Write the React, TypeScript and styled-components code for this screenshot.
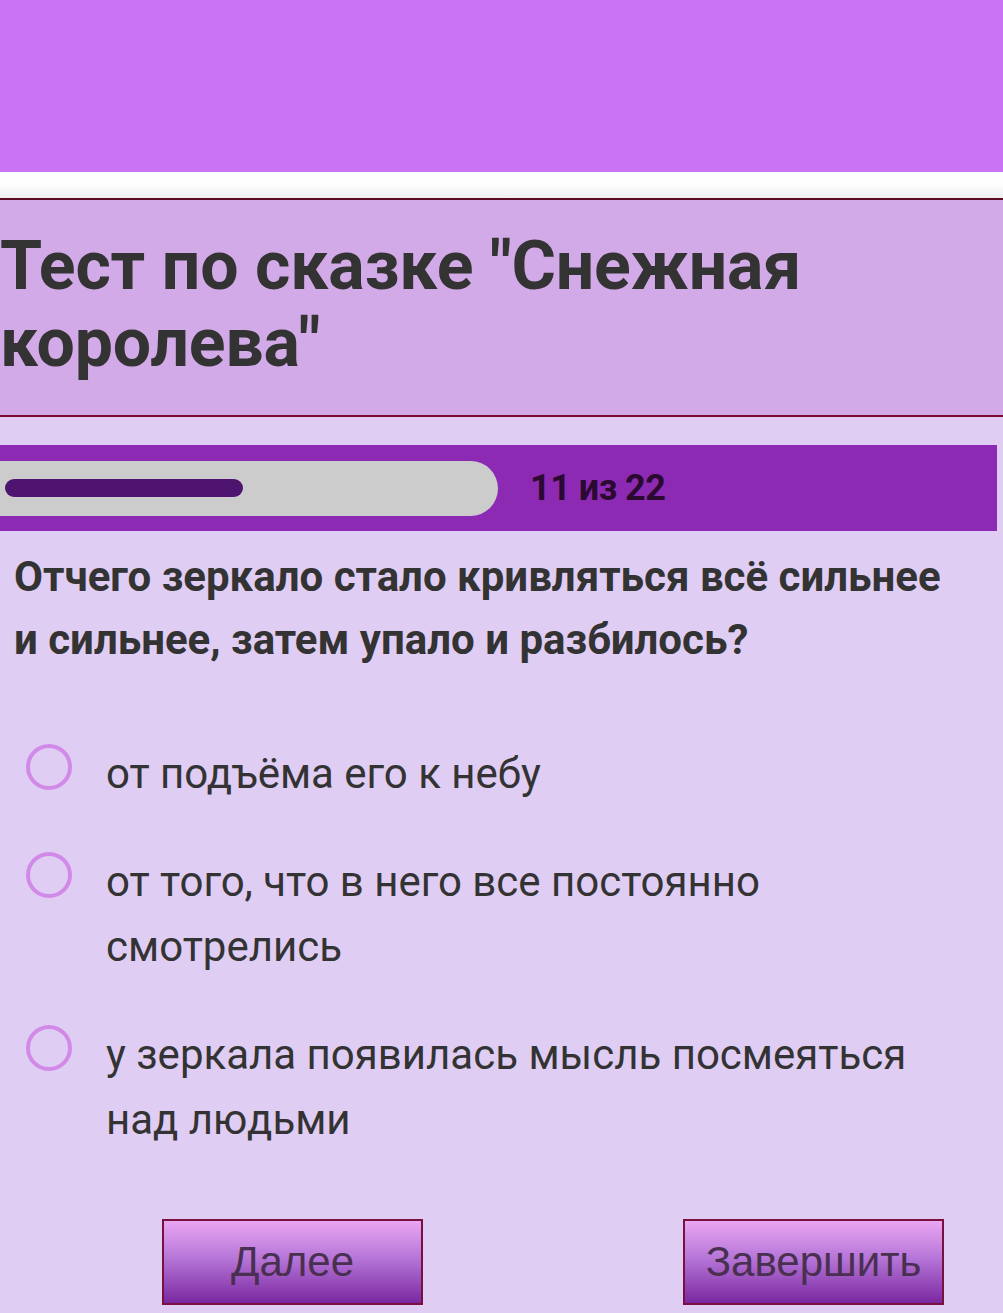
import React, { useState } from "react";
import styled, { createGlobalStyle } from "styled-components";

const GlobalStyle = createGlobalStyle`
  html, body {
    margin: 0;
    padding: 0;
    background: #dfcdf3;
  }
  body {
    font-family: Roboto, "Liberation Sans", Arial, sans-serif;
    color: #333;
  }
`;

const TopBand = styled.div`
  height: 172px;
  background: #c974f5;
`;

const Strip = styled.div`
  height: 26px;
  background: linear-gradient(#ffffff 0%, #fdfdfd 50%, #efefef 100%);
`;

const Header = styled.header`
  background: #d3aae8;
  border-top: 2px solid #5c0a22;
  border-bottom: 2px solid #7a0a2e;
  padding: 28px 0 33px;
`;

const Title = styled.h1`
  margin: 0;
  font-size: 68px;
  font-weight: 700;
  line-height: 77px;
  color: #333;
  letter-spacing: -0.2px;
`;

const Main = styled.main`
  padding-top: 28px;
`;

const ProgressBar = styled.div`
  width: 997px;
  height: 86px;
  background: #8c2ab3;
  display: flex;
  align-items: center;
  gap: 32px;
`;

const Track = styled.div`
  width: 498px;
  height: 55px;
  background: #cccccc;
  border-radius: 0 28px 28px 0;
  display: flex;
  align-items: center;
  padding-left: 5px;
  box-sizing: border-box;
`;

const Fill = styled.div`
  height: 18px;
  background: #4f1470;
  border-radius: 9px;
`;

const Counter = styled.span`
  font-size: 36px;
  font-weight: 700;
  color: #2a0a30;
  letter-spacing: -0.5px;
`;

const Question = styled.p`
  margin: 14px 0 0 14px;
  max-width: 945px;
  font-size: 42px;
  font-weight: 700;
  line-height: 63px;
  color: #333;
`;

const Options = styled.div`
  margin-top: 70px;
  display: flex;
  flex-direction: column;
  gap: 43px;
`;

const Option = styled.label`
  display: flex;
  align-items: flex-start;
  gap: 34px;
  padding-left: 26px;
  cursor: pointer;
`;

const Radio = styled.span<{ $checked: boolean }>`
  flex: none;
  width: 46px;
  height: 46px;
  margin-top: 3px;
  box-sizing: border-box;
  border-radius: 50%;
  border: 4px solid #d28ae8;
  background: ${(p) => (p.$checked ? "radial-gradient(#8c2ab3 40%, transparent 42%)" : "transparent")};
`;

const OptionText = styled.span`
  font-size: 42px;
  line-height: 65px;
  color: #333;
  max-width: 820px;
`;

const Actions = styled.div`
  display: flex;
  justify-content: space-between;
  padding: 0 59px 0 162px;
  margin-top: 67px;
`;

const ActionButton = styled.button`
  width: 261px;
  height: 86px;
  border: 2px solid #7a1040;
  background: linear-gradient(#eaa6f2 0%, #b676d8 45%, #7a28a0 100%);
  font-family: "Liberation Sans", Arial, sans-serif;
  font-size: 42px;
  color: #4a3050;
  cursor: pointer;
`;

const answers = [
  "от подъёма его к небу",
  "от того, что в него все постоянно смотрелись",
  "у зеркала появилась мысль посмеяться над людьми",
];

export default function App() {
  const [selected, setSelected] = useState<number | null>(null);
  const current = 11;
  const total = 22;

  return (
    <>
      <GlobalStyle />
      <TopBand />
      <Strip />
      <Header>
        <Title>
          Тест по сказке "Снежная
          <br />
          королева"
        </Title>
      </Header>
      <Main>
        <ProgressBar>
          <Track>
            <Fill style={{ width: `${(current / total) * 476}px` }} />
          </Track>
          <Counter>
            {current} из {total}
          </Counter>
        </ProgressBar>
        <Question>
          Отчего зеркало стало кривляться всё сильнее и сильнее, затем упало и
          разбилось?
        </Question>
        <Options>
          {answers.map((a, i) => (
            <Option key={i} onClick={() => setSelected(i)}>
              <Radio $checked={selected === i} />
              <OptionText>{a}</OptionText>
            </Option>
          ))}
        </Options>
        <Actions>
          <ActionButton>Далее</ActionButton>
          <ActionButton>Завершить</ActionButton>
        </Actions>
      </Main>
    </>
  );
}
